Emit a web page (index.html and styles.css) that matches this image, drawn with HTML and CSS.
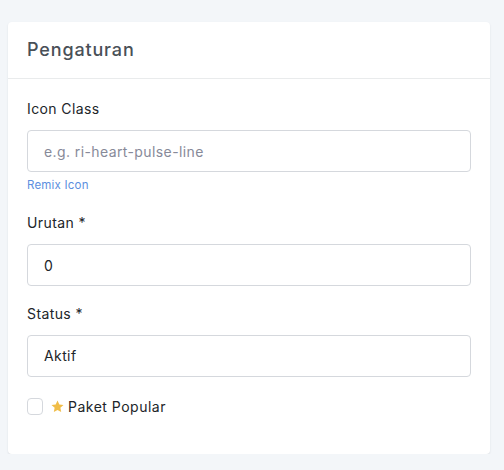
FILE: index.html
```html
<!DOCTYPE html>
<html lang="id">
<head>
<meta charset="utf-8">
<title>Pengaturan</title>
<link rel="stylesheet" href="styles.css">
</head>
<body>
<div class="card">
  <div class="card-header">
    <h4 class="card-title">Pengaturan</h4>
  </div>
  <div class="card-body">
    <div class="form-group">
      <label class="form-label">Icon Class</label>
      <input class="form-control" type="text" placeholder="e.g. ri-heart-pulse-line">
      <div class="help-text">Remix Icon</div>
    </div>
    <div class="form-group">
      <label class="form-label">Urutan *</label>
      <input class="form-control" type="text" value="0">
    </div>
    <div class="form-group">
      <label class="form-label">Status *</label>
      <div class="form-control select">Aktif</div>
    </div>
    <div class="form-group check">
      <span class="checkbox"></span>
      <svg class="star" viewBox="0 0 24 24" width="15" height="15"><path d="M12 2.5l2.9 6.2 6.7.8-5 4.6 1.3 6.7L12 17.5l-5.9 3.3 1.3-6.7-5-4.6 6.7-.8z" fill="#f0bd48"/></svg>
      <span class="check-label">Paket Popular</span>
    </div>
  </div>
</div>
</body>
</html>
```

FILE: styles.css
```css
html, body {
  margin: 0;
  padding: 0;
  background: #f3f6f9;
}
body {
  padding: 22px 14px 0 8px;
  font-family: Inter, "Noto Sans", sans-serif;
  color: #212529;
}
.card {
  background: #fff;
  border-radius: 4px;
  box-shadow: 0 1px 2px rgba(56, 65, 74, 0.12);
  height: 432px;
}
.card-header {
  padding: 16px 19px;
  border-bottom: 1px solid #e9ebec;
}
.card-title {
  margin: 0;
  font-size: 18px;
  line-height: 24px;
  font-weight: 500;
  letter-spacing: 0.85px;
  color: #495057;
}
.card-body {
  padding: 19px 19px 20px;
}
.form-group {
  margin-bottom: 17px;
}
.form-label {
  display: block;
  font-size: 14px;
  line-height: 21px;
  letter-spacing: 0.4px;
  margin-bottom: 11px;
  color: #212529;
}
.form-control {
  display: block;
  box-sizing: border-box;
  width: 100%;
  height: 42px;
  padding: 0 16px;
  border: 1px solid #d5d8dd;
  border-radius: 4px;
  font-family: inherit;
  font-size: 14px;
  letter-spacing: 0.4px;
  color: #212529;
  background: #fff;
  outline: none;
}
.form-control::placeholder {
  color: #878a99;
}
.select {
  line-height: 40px;
}
.help-text {
  margin-top: 4px;
  font-size: 11.5px;
  line-height: 19px;
  letter-spacing: 0.2px;
  color: #5c8fe0;
}
.check {
  display: flex;
  align-items: center;
  margin-top: 21px;
}
.checkbox {
  box-sizing: border-box;
  width: 16px;
  height: 17px;
  border: 1px solid #d5d8dd;
  border-radius: 4px;
  margin-right: 7px;
}
.star {
  margin-right: 3px;
}
.check-label {
  font-size: 14px;
  letter-spacing: 0.5px;
  color: #212529;
}
```
